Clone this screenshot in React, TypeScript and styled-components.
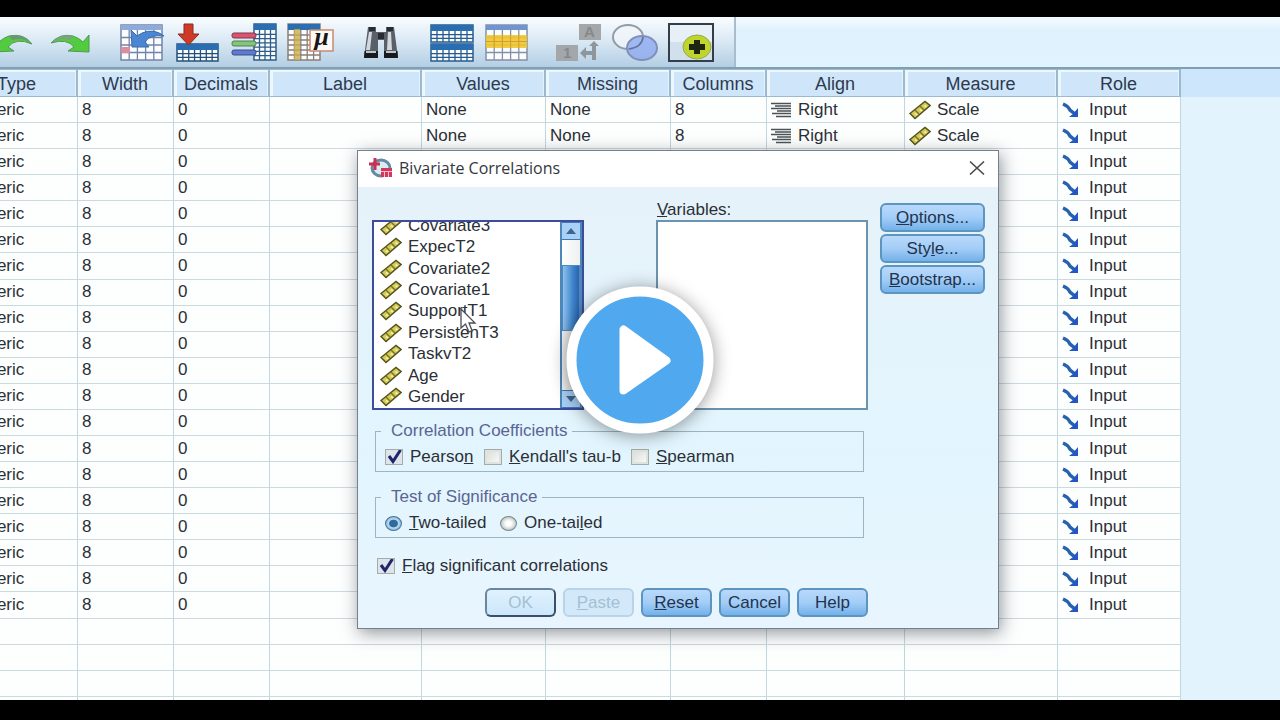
import React from "react";
import styled, { createGlobalStyle, css } from "styled-components";

const GlobalStyle = createGlobalStyle`
  *, *::before, *::after { box-sizing: border-box; }
  html, body { margin: 0; padding: 0; }
  body {
    background: #000;
    color: #2b2f36;
    font-family: "Liberation Sans", Arial, sans-serif;
    font-size: 17px;
    overflow: hidden;
  }
  button, input { font: inherit; color: inherit; margin: 0; }
`;

/* ---------- page ---------- */

const Page = styled.div`
  position: relative;
  display: flex;
  flex-direction: column;
  height: 100vh;
  padding: 17px 0 20px;
  background: #000;
  overflow: hidden;
`;

const Editor = styled.main`
  display: flex;
  flex: 1;
  flex-direction: column;
  min-height: 0;
  background: #e2f3fd;
  overflow: hidden;
`;

const ToolStrip = styled.header`
  display: flex;
  flex: none;
  height: 52px;
  border-bottom: 2px solid #7f9fb2;
  background: linear-gradient(#f4fbff, #def1fc 30%, #e0f3fe);
`;

const Toolbar = styled.div`
  display: flex;
  gap: 15px;
  margin-left: -13px;
  padding-right: 15px;
  border-right: 2px solid #a9bccb;
  background: linear-gradient(#fafdff, #dceaf5 45%, #b3cee4);
`;

const ToolGroup = styled.div`
  display: flex;
`;

const ToolButton = styled.button`
  display: flex;
  align-items: center;
  justify-content: center;
  width: 56px;
  padding: 0;
  border: 0;
  background: none;
`;

/* ---------- grid ---------- */

const GridArea = styled.div`
  flex: 1;
  min-height: 0;
  background: linear-gradient(#cde6fb 28px, #e2f3fd 28px);
  overflow: hidden;
`;

const Sheet = styled.table`
  width: 1224px;
  height: 100%;
  margin-left: -43px;
  border-collapse: separate;
  border-spacing: 0;
  table-layout: fixed;
  background: #fdfefe;
`;

const HeadCell = styled.th`
  height: 28px;
  padding: 2px 0 0;
  border: solid #9bb9cf;
  border-width: 1px 2px 1px 0;
  box-shadow: inset 3px 2px 0 #eef7fd, inset -1px 0 0 #e3f1fb;
  background: #cfe5fa;
  color: #2d3a4e;
  font-size: 18px;
  font-weight: 400;
  line-height: 20px;
  text-align: center;
`;

const Cell = styled.td<{ $short?: boolean }>`
  height: ${(p) => (p.$short ? "3px" : "26px")};
  padding: 0 4px;
  border-right: 1px solid #c3d5dd;
  border-bottom: ${(p) => (p.$short ? "0" : "1px solid #cbdadf")};
  line-height: 20px;
  white-space: nowrap;
`;

const IconValue = styled.span<{ $gap: number }>`
  display: flex;
  align-items: center;
  gap: ${(p) => p.$gap}px;
`;

/* ---------- dialog ---------- */

const Dialog = styled.section`
  position: absolute;
  top: 150px;
  left: 357px;
  width: 642px;
  border: 1px solid #74818b;
  background: #e4f4fe;
  box-shadow: 2px 4px 16px rgba(40, 50, 60, 0.5);
`;

const TitleBar = styled.div`
  display: flex;
  align-items: center;
  gap: 7px;
  height: 36px;
  padding: 0 11px 2px;
  background: #fff;
`;

const Title = styled.h1`
  flex: 1;
  margin: 0;
  color: #33373c;
  font-family: "Open Sans", "Noto Sans", sans-serif;
  font-size: 16px;
  font-weight: 400;
  line-height: 20px;
`;

const CloseButton = styled.button`
  display: flex;
  padding: 2px;
  border: 0;
  background: none;
`;

const Body = styled.div`
  display: flex;
  gap: 12px;
  padding: 13px 13px 11px 14px;
  background: linear-gradient(#e6f2fa, #e2f5fe 60%, #e8f5fe);
`;

const MainColumn = styled.div`
  flex: 1;
  min-width: 0;
`;

const SideColumn = styled.div`
  display: flex;
  flex-direction: column;
  gap: 2px;
  width: 105px;
  padding-top: 3px;
`;

const Lists = styled.div`
  display: flex;
  align-items: flex-end;
  justify-content: space-between;
  margin-bottom: 11px;
`;

const SourceBox = styled.div`
  display: flex;
  align-items: flex-end;
  width: 212px;
  height: 190px;
  border: 2px solid #3e4c9e;
  background: #fff;
  overflow: hidden;
`;

const SourceList = styled.ul`
  display: flex;
  flex: 1;
  flex-direction: column;
  height: 193px;
  margin: 0;
  padding: 0 0 0 6px;
  list-style: none;
`;

const SourceItem = styled.li`
  display: flex;
  flex: 1;
  align-items: center;
  gap: 6px;
  line-height: 20px;
`;

const Scrollbar = styled.div`
  display: flex;
  flex-direction: column;
  align-self: stretch;
  width: 22px;
  border: solid #4d86b8;
  border-width: 0 2px;
  background: linear-gradient(90deg, #fdfefe, #eef1f0);
`;

const ScrollArrow = styled.button`
  display: flex;
  align-items: center;
  justify-content: center;
  height: 18px;
  padding: 0;
  border: solid #4377b4;
  border-width: 1px 0;
  background: #a9d0f6;
`;

const ScrollSpace = styled.div`
  height: 25px;
`;

const ScrollThumb = styled.div`
  height: 66px;
  border: 1px solid #4e8ac0;
  background: linear-gradient(90deg, #8fc0ec, #3f86cc 60%, #2a62ad);
`;

const ScrollTrack = styled.div`
  flex: 1;
  background: linear-gradient(90deg, #f3f4f1, #d5d8da);
`;

const Target = styled.div`
  display: flex;
  flex-direction: column;
  width: 212px;
`;

const TargetLabel = styled.label`
  padding-left: 1px;
  line-height: 20px;
`;

const TargetBox = styled.div`
  height: 190px;
  border: 2px solid #6c93ad;
  background: #fff;
`;

const Group = styled.fieldset`
  min-width: 0;
  margin: 0 4px 15px 3px;
  padding: 0 0 0 9px;
  border: 1px solid #9db4c1;
`;

const Legend = styled.legend`
  margin-left: -4px;
  padding: 0 5px 0 10px;
  color: #5a6493;
  line-height: 20px;
`;

const Choices = styled.div<{ $columns: string }>`
  display: grid;
  grid-template-columns: ${(p) => p.$columns};
  align-items: center;
  height: 30px;
  padding-top: 2px;
`;

const Choice = styled.label`
  display: flex;
  align-items: center;
  gap: 7px;
  line-height: 20px;
  white-space: nowrap;
`;

const FlagChoice = styled(Choice)`
  margin: 18px 0 12px 5px;
`;

const Check = styled.input`
  appearance: none;
  flex: none;
  width: 18px;
  height: 16px;
  border: 1px solid #a3aca9;
  background: linear-gradient(135deg, #d8dcd8, #fbfcfa);
  box-shadow: inset 0 0 0 2px #dfe3df;

  &:checked {
    background: url("data:image/svg+xml,%3Csvg xmlns='http://www.w3.org/2000/svg' viewBox='0 0 16 14'%3E%3Cpath d='M3 6 L7 11.500 L14.500 0' fill='none' stroke='%231f2568' stroke-width='3'/%3E%3C/svg%3E")
      center / 16px 14px no-repeat #dde4ea;
    box-shadow: none;
  }
`;

const Radio = styled.input`
  appearance: none;
  flex: none;
  width: 17px;
  height: 15px;
  border: 1px solid #75898f;
  border-radius: 50%;
  background: radial-gradient(closest-side, #fff 35%, #c3ccc9);

  &:checked {
    border-color: #4a7397;
    background: radial-gradient(closest-side, #2f6b9d 52%, #b8dcf4 66%, #8eb9da);
  }
`;

const Actions = styled.div`
  display: flex;
  justify-content: flex-end;
  gap: 7px;
`;

const PushButton = styled.button<{ $side?: boolean; $main?: boolean }>`
  width: ${(p) => (p.$side ? "105px" : "71px")};
  height: 29px;
  padding: 0;
  border: 2px solid #5c95bf;
  border-radius: 6px;
  background: linear-gradient(#b9d9fb, #a3cdf7 50%, #74b1ea);
  color: #22334d;
  line-height: 20px;
  white-space: nowrap;

  &:disabled {
    border-color: #b9d4e6;
    background: #d3e9fa;
    color: #a5bfd3;
  }

  ${(p) =>
    p.$main &&
    css`
      &:disabled {
        border-color: #6a86a0 #3c4f68 #3c4f68 #6a86a0;
        background: linear-gradient(#e0f2fe, #cce6fa);
      }
    `}
`;

const Pointer = styled.svg`
  position: absolute;
  top: 157px;
  left: 101px;
`;

const PlayButton = styled.button`
  position: absolute;
  top: 50%;
  left: 50%;
  display: flex;
  width: 147px;
  height: 147px;
  padding: 0;
  border: 10px solid #fff;
  border-radius: 50%;
  background: #50a8ef;
  box-shadow: 0 2px 18px rgba(0, 0, 0, 0.42);
  transform: translate(-50%, -50%);
`;

/* ---------- icons ---------- */

const ToolSvg = ({ children }: { children: React.ReactNode }) => (
  <svg width="48" height="40" viewBox="0 0 48 40" aria-hidden="true">
    {children}
  </svg>
);

type TableProps = { x: number; y: number; w: number; h: number; cols: number; rows: number; head?: number; line?: string; top?: string };

const TableShape = ({ x, y, w, h, cols, rows, head = 6, line = "#3b668f", top = "#2a6db0" }: TableProps) => {
  const lines: string[] = [];
  for (let c = 1; c < cols; c++) lines.push(`M${x + (w * c) / cols} ${y + head}V${y + h}`);
  for (let r = 1; r < rows; r++) lines.push(`M${x} ${y + head + ((h - head) * r) / rows}H${x + w}`);
  return (
    <g>
      <rect x={x} y={y} width={w} height={h} fill="#fbfdff" stroke={line} strokeWidth="1.5" />
      <rect x={x} y={y} width={w} height={head} fill={top} />
      <path d={lines.join("")} stroke={line} strokeWidth="1.3" />
    </g>
  );
};

const UndoIcon = () => (
  <ToolSvg>
    <path d="M2 13 L2 30 L23 29 L17 25 Q25 15 41 22 Q33 11 18 14 Q12 16 8 20 Z" fill="#52cb3f" stroke="#4f9a56" />
    <path d="M18 14 Q33 11 41 22 Q33 15 21 18 Z" fill="#6f9578" />
  </ToolSvg>
);

const RedoIcon = () => (
  <ToolSvg>
    <path d="M42 13 L42 30 L21 29 L27 25 Q20 16 4 21 Q13 11 26 14 Q32 16 36 20 Z" fill="#52cb3f" stroke="#4f9a56" />
    <path d="M26 14 Q13 11 4 21 Q13 15 23 18 Z" fill="#7ba281" />
  </ToolSvg>
);

const GotoCaseIcon = () => (
  <ToolSvg>
    <TableShape x={3} y={3} w={41} h={35} cols={5} rows={4} head={5} line="#7184a8" top="#8eaadb" />
    <path d="M3 25 L12 25 L12 31 L3 31Z" fill="#dc8c9c" />
    <path d="M13 8 L14 25 L31 25 L27 20 Q32 12 46 14 Q36 6 24 11 L19 14 Z" fill="#4a86d2" stroke="#3a6cb0" />
  </ToolSvg>
);

const GotoVariableIcon = () => (
  <ToolSvg>
    <TableShape x={3} y={22} w={41} h={17} cols={7} rows={3} line="#24517c" />
    <path d="M10 2 H19 V12 H25 L14.500 23 L4 12 H10 Z" fill="#ce3a25" stroke="#8b2b22" />
  </ToolSvg>
);

const VariablesIcon = () => (
  <ToolSvg>
    <TableShape x={24} y={2} w={22} h={36} cols={4} rows={7} line="#2d5c8a" />
    <g stroke="#7d3950" strokeWidth="1">
      <rect x="2" y="11" width="24" height="5" rx="2" fill="#dd526e" />
      <rect x="2" y="19" width="24" height="5" rx="2" fill="#83c57a" stroke="#50814f" />
      <rect x="2" y="28" width="24" height="5" rx="2" fill="#5f7bd0" stroke="#3b4c8e" />
    </g>
  </ToolSvg>
);

const StatisticsIcon = () => (
  <ToolSvg>
    <TableShape x={2} y={2} w={32} h={36} cols={5} rows={6} line="#8a7f78" />
    <rect x="8" y="7" width="6" height="31" fill="#c9ad4b" opacity="0.8" />
    <rect x="24" y="8" width="23" height="21" fill="#fffaf4" stroke="#c78b72" strokeWidth="1.5" />
    <text x="28" y="23" fontFamily="Liberation Serif, serif" fontSize="26" fontWeight="700" fontStyle="italic" fill="#17171a">
      µ
    </text>
  </ToolSvg>
);

const FindIcon = () => (
  <ToolSvg>
    <path d="M11 5 H19 V10 H29 V5 H37 L41 36 H27 V18 H21 V36 H7 Z" fill="#596069" />
    <path d="M12 5H18V9H12Z M30 5H36V9H30Z M21 11H27V17H21Z" fill="#282c32" />
    <path d="M12 10 H15 L13 28 H9 Z M31 10 H34 L35 28 H30 Z" fill="#d3d8dc" />
    <path d="M7.500 29 H21 V36 H7Z M27 29 H40.500 L41 36 H27Z" fill="#17191d" />
    <path d="M9 30H19 M29 30H39" stroke="#bfc5ca" strokeWidth="2" />
  </ToolSvg>
);

const SplitIcon = () => (
  <ToolSvg>
    <TableShape x={3} y={3} w={42} h={17} cols={7} rows={3} line="#245c90" />
    <TableShape x={3} y={22} w={42} h={17} cols={7} rows={3} line="#245c90" />
  </ToolSvg>
);

const SelectCasesIcon = () => (
  <ToolSvg>
    <TableShape x={2} y={3} w={41} h={35} cols={5} rows={4} head={5} line="#8590a8" top="#6f94cf" />
    <rect x="2" y="13" width="41" height="13" fill="#f0c62e" opacity="0.9" />
    <path d="M2 19.500H43 M10.200 13V26 M18.400 13V26 M26.600 13V26 M34.800 13V26" stroke="#d29f2b" />
  </ToolSvg>
);

const ValueLabelsIcon = () => (
  <ToolSvg>
    <rect x="24" y="2" width="22" height="16" fill="#a3a7a9" />
    <rect x="1" y="23" width="22" height="16" fill="#a3a7a9" />
    <text x="29" y="15" fontSize="15" fontWeight="700" fill="#85898c">
      A
    </text>
    <text x="8" y="36" fontSize="15" fontWeight="700" fill="#85898c">
      1
    </text>
    <path d="M39 19 L44 24 H41 V38 H37 V33 H31 V37 L25 31 L31 25 V29 H37 V24 H34 Z" fill="#8f969b" />
  </ToolSvg>
);

const UseSetsIcon = () => (
  <ToolSvg>
    <ellipse cx="17" cy="15" rx="15" ry="12" fill="#f2f6fa" fillOpacity="0.75" stroke="#929ca6" strokeWidth="2" />
    <ellipse cx="31" cy="26" rx="15" ry="12" fill="#8daaf0" fillOpacity="0.8" stroke="#8090b8" strokeWidth="2" />
    <path d="M18 27 Q31 25 32 15" fill="none" stroke="#626f99" strokeWidth="1.500" />
  </ToolSvg>
);

const ShowAllIcon = () => (
  <ToolSvg>
    <rect x="2" y="2" width="44" height="37" fill="#e7eff7" stroke="#353d49" strokeWidth="2" />
    <path d="M3 20H45V38H3Z" fill="#d2dfec" />
    <ellipse cx="30" cy="25" rx="14" ry="12" fill="#bfd52c" stroke="#95a953" />
    <path d="M27 18H33V22H38V28H33V32H27V28H22V22H27Z" fill="#1c2613" />
  </ToolSvg>
);

const RulerIcon = () => (
  <svg width="22" height="20" viewBox="0 0 22 20" aria-hidden="true">
    <path d="M1 13.500 L16 1.500 L21 5.500 L6 18.500 Z" fill="#d3cb55" stroke="#55521f" strokeWidth="1.500" />
    <path d="M6 10 L10 14 M11 6 L15 10" stroke="#77702a" strokeWidth="1.300" />
    <path d="M6 13.500 L8 15 M11 9.500 L13 11 M15.500 5.500 L17.500 7" stroke="#f1eda0" strokeWidth="2" />
  </svg>
);

const AlignRightIcon = () => (
  <svg width="20" height="16" viewBox="0 0 20 16" aria-hidden="true">
    <path d="M0 1.500H20 M4 4H20 M0 6.500H20 M6 9H20 M1 11.500H20 M5 14.500H20" stroke="#4b5356" strokeWidth="1.700" />
  </svg>
);

const InputIcon = () => (
  <svg width="17" height="16" viewBox="0 0 17 16" aria-hidden="true">
    <path d="M1 2 Q6 4 8 8 L13 12" fill="none" stroke="#2862ae" strokeWidth="3.500" />
    <path d="M16 6 V15 H7 L11 12 Z" fill="#2358c4" />
  </svg>
);

const AppIcon = () => (
  <svg width="23" height="20" viewBox="0 0 23 20" aria-hidden="true">
    <ellipse cx="12" cy="10" rx="9" ry="8" fill="#d8ecf4" stroke="#648ba2" strokeWidth="3" />
    <path d="M0 6H11 M6 0V12" stroke="#cc2f54" strokeWidth="3" />
    <rect x="12" y="10" width="11" height="9" fill="#d7355b" />
    <path d="M12 13.500H23 M15.500 14V19 M19.500 14V19" stroke="#f4c3cf" />
  </svg>
);

const Arrow = ({ down }: { down?: boolean }) => (
  <svg width="10" height="6" viewBox="0 0 10 6" aria-hidden="true">
    <path d={down ? "M0 0H10L5 6Z" : "M0 6H10L5 0Z"} fill="#42658a" />
  </svg>
);

/* ---------- data ---------- */

const toolGroups = [
  [
    { name: "Undo", icon: <UndoIcon /> },
    { name: "Redo", icon: <RedoIcon /> },
  ],
  [
    { name: "Go to case", icon: <GotoCaseIcon /> },
    { name: "Go to variable", icon: <GotoVariableIcon /> },
    { name: "Variables", icon: <VariablesIcon /> },
    { name: "Descriptive statistics", icon: <StatisticsIcon /> },
  ],
  [{ name: "Find", icon: <FindIcon /> }],
  [
    { name: "Split file", icon: <SplitIcon /> },
    { name: "Select cases", icon: <SelectCasesIcon /> },
  ],
  [
    { name: "Value labels", icon: <ValueLabelsIcon /> },
    { name: "Use variable sets", icon: <UseSetsIcon /> },
    { name: "Show all variables", icon: <ShowAllIcon /> },
  ],
];

const columns = [
  { name: "Type", width: 121 },
  { name: "Width", width: 96 },
  { name: "Decimals", width: 96 },
  { name: "Label", width: 152 },
  { name: "Values", width: 124 },
  { name: "Missing", width: 125 },
  { name: "Columns", width: 96 },
  { name: "Align", width: 138 },
  { name: "Measure", width: 153 },
  { name: "Role", width: 123 },
];

const inputRole = (
  <IconValue $gap={10}>
    <InputIcon />
    Input
  </IconValue>
);

const fullRow: React.ReactNode[] = [
  "Numeric",
  "8",
  "0",
  "",
  "None",
  "None",
  "8",
  <IconValue $gap={7}>
    <AlignRightIcon />
    Right
  </IconValue>,
  <IconValue $gap={6}>
    <RulerIcon />
    Scale
  </IconValue>,
  inputRole,
];

const briefRow: React.ReactNode[] = ["Numeric", "8", "0", "", "", "", "", "", "", inputRole];

const rows = [...Array(2).fill(fullRow), ...Array(18).fill(briefRow)] as React.ReactNode[][];

const variables = ["Covariate3", "ExpecT2", "Covariate2", "Covariate1", "SupportT1", "PersistenT3", "TaskvT2", "Age", "Gender"];

const EMPTY_ROWS = 3;

export default function App() {
  return (
    <>
      <GlobalStyle />
      <Page>
        <Editor>
          <ToolStrip>
            <Toolbar>
              {toolGroups.map((group, i) => (
                <ToolGroup key={i}>
                  {group.map((tool) => (
                    <ToolButton key={tool.name} type="button" aria-label={tool.name}>
                      {tool.icon}
                    </ToolButton>
                  ))}
                </ToolGroup>
              ))}
            </Toolbar>
          </ToolStrip>
          <GridArea>
            <Sheet>
              <colgroup>
                {columns.map((c) => (
                  <col key={c.name} width={c.width} />
                ))}
              </colgroup>
              <thead>
                <tr>
                  {columns.map((c) => (
                    <HeadCell key={c.name} scope="col">
                      {c.name}
                    </HeadCell>
                  ))}
                </tr>
              </thead>
              <tbody>
                {rows.map((row, r) => (
                  <tr key={r}>
                    {row.map((value, c) => (
                      <Cell key={c}>{value}</Cell>
                    ))}
                  </tr>
                ))}
                {Array.from({ length: EMPTY_ROWS + 1 }, (_, r) => (
                  <tr key={r}>
                    {columns.map((c) => (
                      <Cell key={c.name} $short={r === EMPTY_ROWS} />
                    ))}
                  </tr>
                ))}
              </tbody>
            </Sheet>
          </GridArea>
        </Editor>

        <Dialog role="dialog" aria-labelledby="dialog-title">
          <TitleBar>
            <AppIcon />
            <Title id="dialog-title">Bivariate Correlations</Title>
            <CloseButton type="button" aria-label="Close">
              <svg width="16" height="14" viewBox="0 0 16 14" aria-hidden="true">
                <path d="M1 0.500 L15 13.500 M15 0.500 L1 13.500" stroke="#44484c" strokeWidth="1.500" />
              </svg>
            </CloseButton>
          </TitleBar>
          <Body>
            <MainColumn>
              <Lists>
                <SourceBox>
                  <SourceList role="listbox" aria-label="Source variables">
                    {variables.map((name) => (
                      <SourceItem key={name} role="option" aria-selected={false}>
                        <RulerIcon />
                        {name}
                      </SourceItem>
                    ))}
                  </SourceList>
                  <Scrollbar>
                    <ScrollArrow type="button" aria-label="Scroll up">
                      <Arrow />
                    </ScrollArrow>
                    <ScrollSpace />
                    <ScrollThumb />
                    <ScrollTrack />
                    <ScrollArrow type="button" aria-label="Scroll down">
                      <Arrow down />
                    </ScrollArrow>
                  </Scrollbar>
                </SourceBox>
                <Target>
                  <TargetLabel id="target-label">
                    <u>V</u>ariables:
                  </TargetLabel>
                  <TargetBox role="listbox" aria-labelledby="target-label" />
                </Target>
              </Lists>

              <Group>
                <Legend>Correlation Coefficients</Legend>
                <Choices $columns="99px 147px auto">
                  <Choice>
                    <Check type="checkbox" defaultChecked />
                    <span>
                      Pearso<u>n</u>
                    </span>
                  </Choice>
                  <Choice>
                    <Check type="checkbox" />
                    <span>
                      <u>K</u>endall's tau-b
                    </span>
                  </Choice>
                  <Choice>
                    <Check type="checkbox" />
                    <span>
                      <u>S</u>pearman
                    </span>
                  </Choice>
                </Choices>
              </Group>

              <Group>
                <Legend>Test of Significance</Legend>
                <Choices $columns="115px auto">
                  <Choice>
                    <Radio type="radio" name="tails" defaultChecked />
                    <span>
                      <u>T</u>wo-tailed
                    </span>
                  </Choice>
                  <Choice>
                    <Radio type="radio" name="tails" />
                    <span>
                      One-tai<u>l</u>ed
                    </span>
                  </Choice>
                </Choices>
              </Group>

              <FlagChoice>
                <Check type="checkbox" defaultChecked />
                <span>
                  <u>F</u>lag significant correlations
                </span>
              </FlagChoice>

              <Actions>
                <PushButton type="button" disabled $main>
                  OK
                </PushButton>
                <PushButton type="button" disabled>
                  <u>P</u>aste
                </PushButton>
                <PushButton type="button">
                  <u>R</u>eset
                </PushButton>
                <PushButton type="button">Cancel</PushButton>
                <PushButton type="button">Help</PushButton>
              </Actions>
            </MainColumn>
            <SideColumn>
              <PushButton type="button" $side>
                <u>O</u>ptions...
              </PushButton>
              <PushButton type="button" $side>
                Sty<u>l</u>e...
              </PushButton>
              <PushButton type="button" $side>
                <u>B</u>ootstrap...
              </PushButton>
            </SideColumn>
          </Body>
          <Pointer width="18" height="26" viewBox="0 0 18 26" aria-hidden="true">
            <path d="M2 1 V20 L6.500 16 L10 24 L13 22.500 L10 15 H16 Z" fill="#fff" stroke="#4c4f55" strokeWidth="1.300" />
          </Pointer>
        </Dialog>

        <PlayButton type="button" aria-label="Play">
          <svg width="127" height="127" viewBox="0 0 127 127" aria-hidden="true">
            <path d="M47 52 V113 L90 83 Z" transform="translate(0 -19)" fill="#fff" stroke="#fff" strokeWidth="8" strokeLinejoin="round" />
          </svg>
        </PlayButton>
      </Page>
    </>
  );
}
